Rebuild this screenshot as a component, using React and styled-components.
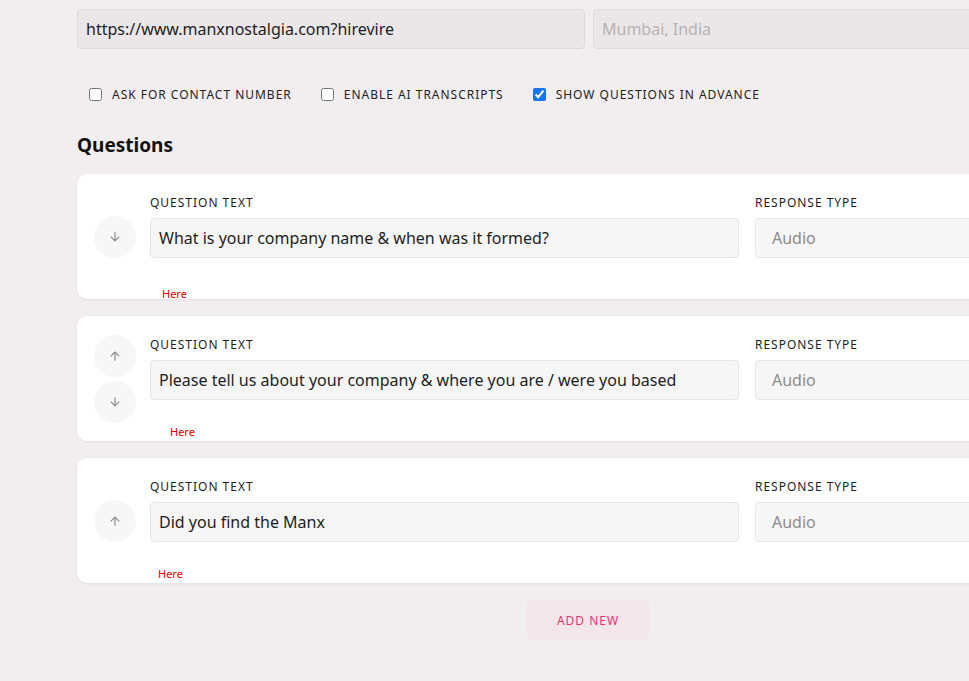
import styled, { createGlobalStyle } from "styled-components";

const GlobalStyle = createGlobalStyle`
  html, body {
    margin: 0;
    padding: 0;
    overflow: hidden;
    background: #f2eef0;
    font-family: "Noto Sans", "Open Sans", sans-serif;
    color: #1e1e1e;
  }
  * { box-sizing: border-box; }
`;

const Page = styled.div`
  width: 1022px;
  margin-left: 77px;
  padding-top: 9px;
  padding-bottom: 40px;
`;

const TopRow = styled.div`
  display: grid;
  grid-template-columns: 508px 1fr;
  gap: 8px;
`;

const TopInput = styled.div`
  height: 40px;
  display: flex;
  align-items: center;
  padding: 0 8px;
  background: #ebe7e9;
  border: 1px solid #dedadc;
  border-radius: 4px;
  font-size: 16px;
  color: ${(p) => (p.$muted ? "#b5b1b3" : "#1e1e1e")};
`;

const Options = styled.div`
  display: flex;
  align-items: center;
  gap: 29px;
  padding-left: 12px;
  margin-top: 37px;
`;

const Option = styled.label`
  display: flex;
  align-items: center;
  gap: 10px;
  font-size: 12px;
  letter-spacing: 0.98px;
  text-transform: uppercase;
  color: #222;

  input {
    margin: 0;
    width: 13px;
    height: 13px;
    accent-color: #1a73e8;
  }
`;

const Heading = styled.h2`
  margin: 29px 0 16px;
  font-size: 19px;
  font-weight: 700;
  line-height: 26px;
  color: #111;
`;

const List = styled.div`
  display: flex;
  flex-direction: column;
  gap: 17px;
`;

const Card = styled.div`
  position: relative;
  height: 125px;
  display: grid;
  grid-template-columns: 42px 589px 1fr;
  column-gap: 14px;
  align-items: center;
  padding: 0 17px;
  background: #fff;
  border-radius: 10px;
  box-shadow: 0 1px 3px rgba(0, 0, 0, 0.06);
`;

const Arrows = styled.div`
  display: flex;
  flex-direction: column;
  gap: 4px;
`;

const ArrowButton = styled.button`
  width: 42px;
  height: 42px;
  border: none;
  border-radius: 50%;
  background: #f7f7f7;
  display: flex;
  align-items: center;
  justify-content: center;
  padding: 0;
  color: #8a8a8a;
`;

const Field = styled.div`
  align-self: start;
  padding-top: 20px;
  margin-left: ${(p) => p.$shift || 0}px;
`;

const Label = styled.div`
  font-size: 12px;
  letter-spacing: 0.98px;
  text-transform: uppercase;
  color: #1e1e1e;
  line-height: 17px;
  margin-bottom: 7px;
`;

const Box = styled.div`
  height: 40px;
  display: flex;
  align-items: center;
  padding: 0 ${(p) => (p.$wide ? 16 : 8)}px;
  background: #f6f6f6;
  border: 1px solid #e6e6e6;
  border-radius: 4px;
  font-size: 16px;
  color: ${(p) => (p.$muted ? "#8c8c8c" : "#1e1e1e")};
`;

const Hint = styled.div`
  position: absolute;
  left: ${(p) => p.$left}px;
  top: ${(p) => p.$top}px;
  font-size: 11px;
  color: #e00000;
`;

const AddRow = styled.div`
  display: flex;
  justify-content: center;
  margin-top: 17px;
`;

const AddButton = styled.button`
  width: 124px;
  height: 40px;
  border: none;
  border-radius: 8px;
  background: #f2e6ea;
  color: #e8336e;
  font-family: "Noto Sans", sans-serif;
  font-size: 12px;
  letter-spacing: 0.98px;
`;

const Arrow = ({ up }) => (
  <svg width="14" height="14" viewBox="0 0 24 24" fill="currentColor" style={{ transform: up ? "rotate(180deg)" : "none" }}>
    <path d="M20 12l-1.41-1.41L13 16.17V4h-2v12.17l-5.58-5.59L4 12l8 8 8-8z" />
  </svg>
);

const questions = [
  { text: "What is your company name & when was it formed?", down: true, hint: { left: 85, top: 112 } },
  { text: "Please tell us about your company & where you are / were you based", up: true, down: true, hint: { left: 93, top: 108 } },
  { text: "Did you find the Manx", up: true, hint: { left: 81, top: 108 } },
];

export default function App() {
  return (
    <>
      <GlobalStyle />
      <Page>
        <TopRow>
          <TopInput>https://www.manxnostalgia.com?hirevire</TopInput>
          <TopInput $muted>Mumbai, India</TopInput>
        </TopRow>

        <Options>
          <Option>
            <input type="checkbox" readOnly />
            Ask for contact number
          </Option>
          <Option>
            <input type="checkbox" readOnly />
            Enable AI transcripts
          </Option>
          <Option>
            <input type="checkbox" defaultChecked />
            Show questions in advance
          </Option>
        </Options>

        <Heading>Questions</Heading>

        <List>
          {questions.map((q) => (
            <Card key={q.text}>
              <Arrows>
                {q.up && (
                  <ArrowButton>
                    <Arrow up />
                  </ArrowButton>
                )}
                {q.down && (
                  <ArrowButton>
                    <Arrow />
                  </ArrowButton>
                )}
              </Arrows>
              <Field>
                <Label>Question text</Label>
                <Box>{q.text}</Box>
              </Field>
              <Field $shift={2}>
                <Label>Response type</Label>
                <Box $muted $wide>Audio</Box>
              </Field>
              <Hint $left={q.hint.left} $top={q.hint.top}>Here</Hint>
            </Card>
          ))}
        </List>

        <AddRow>
          <AddButton>ADD NEW</AddButton>
        </AddRow>
      </Page>
    </>
  );
}
